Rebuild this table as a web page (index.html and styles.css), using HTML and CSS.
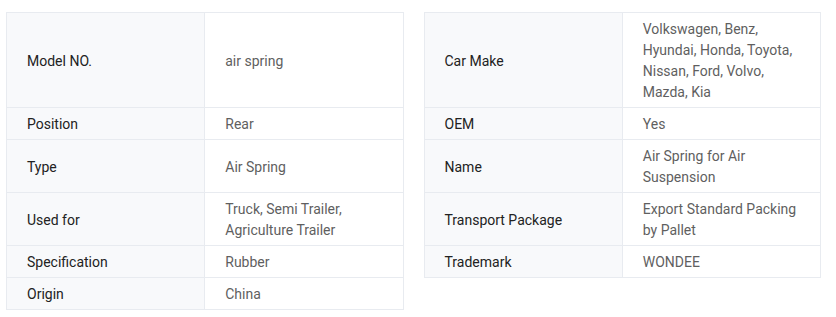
FILE: index.html
```html
<!DOCTYPE html>
<html>
<head>
<meta charset="utf-8">
<link rel="stylesheet" href="styles.css">
</head>
<body>
<div class="wrap">
  <table class="spec">
    <tr class="four"><th>Model NO.</th><td>air spring</td></tr>
    <tr><th>Position</th><td>Rear</td></tr>
    <tr class="two"><th>Type</th><td>Air Spring</td></tr>
    <tr class="two"><th>Used for</th><td>Truck, Semi Trailer, Agriculture Trailer</td></tr>
    <tr><th>Specification</th><td>Rubber</td></tr>
    <tr><th>Origin</th><td>China</td></tr>
  </table>
  <table class="spec">
    <tr class="four"><th>Car Make</th><td>Volkswagen, Benz, Hyundai, Honda, Toyota, Nissan, Ford, Volvo, Mazda, Kia</td></tr>
    <tr><th>OEM</th><td>Yes</td></tr>
    <tr class="two"><th>Name</th><td>Air Spring for Air Suspension</td></tr>
    <tr class="two"><th>Transport Package</th><td>Export Standard Packing by Pallet</td></tr>
    <tr><th>Trademark</th><td>WONDEE</td></tr>
  </table>
</div>
</body>
</html>
```

FILE: styles.css
```css
html, body {
  margin: 0;
  padding: 0;
  background: #ffffff;
}
.wrap {
  display: flex;
  align-items: flex-start;
  gap: 20px;
  padding: 12px 15px 0 6px;
  font-family: Roboto, "Liberation Sans", sans-serif;
  font-size: 14px;
  line-height: 21px;
}
.spec {
  flex: 1;
  width: 50%;
  border-collapse: collapse;
  table-layout: fixed;
}
.spec th, .spec td {
  border: 1px solid #e8ebf0;
  padding: 6px 20px 4px;
  height: 21px;
  text-align: left;
  vertical-align: middle;
  font-weight: 400;
  width: 50%;
}
.spec th {
  background: #f8f9fb;
  color: #222222;
}
.spec td {
  background: #ffffff;
  color: #5f5f5f;
}
.spec .two th, .spec .two td {
  height: 42px;
}
.spec .four th, .spec .four td {
  height: 84px;
}
```
